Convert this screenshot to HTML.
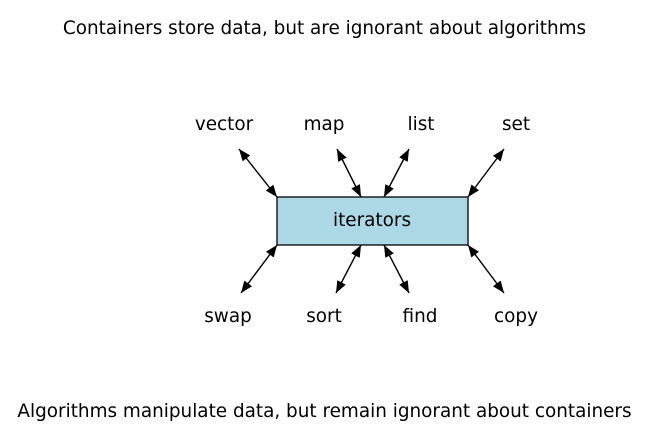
<!DOCTYPE html>
<html><head><style>body{margin:0;background:#fff}svg{display:block}</style></head>
<body>
<svg width="649" height="443" viewBox="0 0 649 443" xmlns="http://www.w3.org/2000/svg" font-family="DejaVu Sans, sans-serif" font-size="18.4" fill="#000">
<defs>
<marker id="a" viewBox="0 0 10 10" refX="10" refY="5" markerWidth="12" markerHeight="12" markerUnits="userSpaceOnUse" orient="auto-start-reverse"><path d="M0,1 L10,5 L0,9 z" fill="#000"/></marker>
</defs>
<text x="324.5" y="34" text-anchor="middle">Containers store data, but are ignorant about algorithms</text>
<text x="324.5" y="417" text-anchor="middle">Algorithms manipulate data, but remain ignorant about containers</text>
<g text-anchor="middle">
<text x="224" y="130">vector</text>
<text x="324" y="130">map</text>
<text x="421" y="130">list</text>
<text x="516" y="130">set</text>
<text x="228" y="322">swap</text>
<text x="324" y="322">sort</text>
<text x="420" y="322">find</text>
<text x="516" y="322">copy</text>
</g>
<rect x="277" y="197" width="191" height="48" fill="#add8e6" stroke="#000" stroke-width="1.3"/>
<text x="372" y="226" text-anchor="middle">iterators</text>
<g stroke="#000" stroke-width="1.4" marker-start="url(#a)" marker-end="url(#a)" fill="none">
<line x1="239" y1="149" x2="277" y2="197"/>
<line x1="337" y1="149" x2="361" y2="197"/>
<line x1="409" y1="149" x2="384" y2="197"/>
<line x1="504" y1="149" x2="468" y2="197"/>
<line x1="241" y1="293" x2="277" y2="245"/>
<line x1="336" y1="293" x2="361" y2="245"/>
<line x1="409" y1="293" x2="384" y2="245"/>
<line x1="504" y1="293" x2="468" y2="245"/>
</g>
</svg>
</body></html>
